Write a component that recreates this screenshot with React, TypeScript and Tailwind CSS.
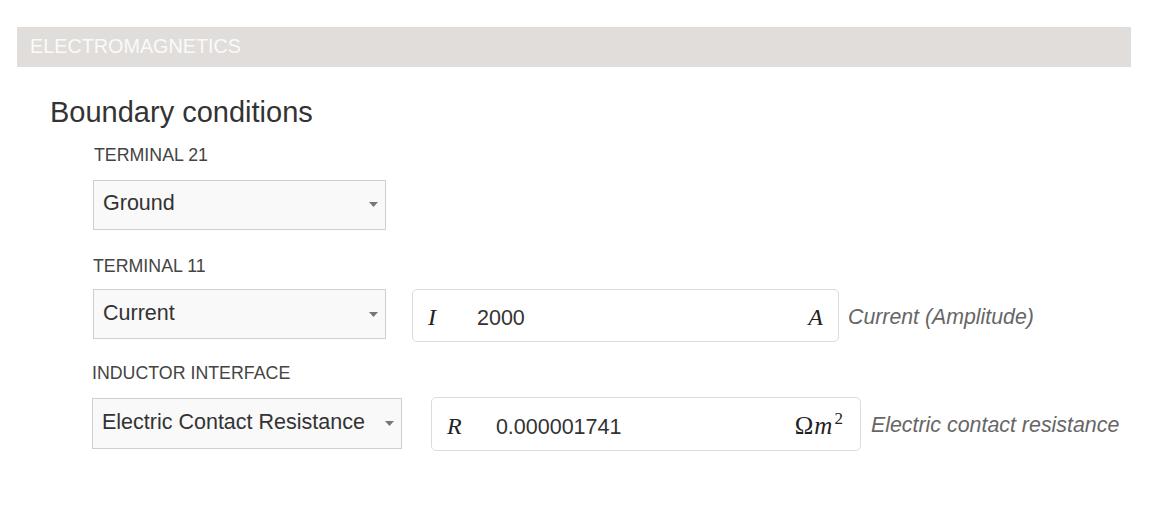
import React from "react";

function Caret() {
  return (
    <svg width="9" height="5" viewBox="0 0 9 5" className="shrink-0">
      <polygon points="0,0 9,0 4.5,5" fill="#777777" />
    </svg>
  );
}

function Select({ value, h, minW }: { value: string; h: string; minW: string }) {
  return (
    <div
      className={`inline-flex items-center justify-between gap-[20px] border border-[#cfcfcf] bg-[#f9f9f9] pl-[9px] pr-[7px] ${h} ${minW}`}
    >
      <span className="mb-[1px] text-[21.5px] leading-none text-[#333333] whitespace-nowrap">{value}</span>
      <Caret />
    </div>
  );
}

const mathFont = "font-['Liberation_Serif','Times_New_Roman',serif] italic text-[#222222]";

export default function App() {
  return (
    <div className="w-[1164px] h-[514px] bg-white pt-[27px] pl-[17px] font-['Liberation_Sans',Arial,sans-serif]">
      <div className="w-[1114px] h-[40px] bg-[#e0dddb] flex items-center pl-[13px] text-[19.8px] leading-none text-[#fafafa]">
        ELECTROMAGNETICS
      </div>
      <h2 className="mt-[31px] ml-[33px] text-[29px] leading-[29px] text-[#333333]">Boundary conditions</h2>
      <div className="ml-[75px] flex flex-col items-start">
        <div className="mt-[20px] ml-[2px] text-[17.8px] leading-[17.5px] text-[#444444]">TERMINAL 21</div>
        <div className="mt-[15px] ml-[1px]">
          <Select value="Ground" h="h-[50px]" minW="w-[293px]" />
        </div>

        <div className="mt-[28px] ml-[1px] text-[17.8px] leading-[17.5px] text-[#444444]">TERMINAL 11</div>
        <div className="mt-[14px] ml-[1px] flex items-start">
          <Select value="Current" h="h-[50px]" minW="w-[293px]" />
          <div className="ml-[26px] w-[427px] h-[53px] flex items-center pt-[4px] border border-[#dcdcdc] rounded-[5px] bg-white">
            <div className="flex-1 flex items-baseline">
              <span className={`pl-[15px] w-[64px] text-[24px] leading-none ${mathFont}`}>I</span>
              <span className="flex-1 text-[21.5px] leading-none text-[#333333]">2000</span>
              <span className={`pr-[15px] text-[24px] leading-none ${mathFont}`}>A</span>
            </div>
          </div>
          <div className="ml-[9px] self-center pt-[4px] text-[21.3px] leading-none italic text-[#666666] whitespace-nowrap">
            Current (Amplitude)
          </div>
        </div>

        <div className="mt-[23px] text-[17.8px] leading-[17.5px] text-[#444444]">INDUCTOR INTERFACE</div>
        <div className="mt-[14px] flex items-start">
          <div className="mt-[1px]">
            <Select value="Electric Contact Resistance" h="h-[51px]" minW="min-w-[293px]" />
          </div>
          <div className="ml-[29px] w-[430px] h-[54px] flex items-center pt-[4px] border border-[#dcdcdc] rounded-[5px] bg-white">
            <div className="flex-1 flex items-baseline">
              <span className={`pl-[15px] w-[64px] text-[24px] leading-none ${mathFont}`}>R</span>
              <span className="flex-1 text-[21.5px] leading-none text-[#333333]">0.000001741</span>
              <span className="pr-[17px] text-[25px] leading-none text-[#222222] font-['Liberation_Serif','Times_New_Roman',serif] whitespace-nowrap">
                Ω<span className="italic ml-[1px]">m</span>
                <sup className="text-[17px] relative -top-[10px] ml-[2px]">2</sup>
              </span>
            </div>
          </div>
          <div className="ml-[10px] self-center pt-[4px] text-[21.4px] leading-none italic text-[#666666] whitespace-nowrap">
            Electric contact resistance
          </div>
        </div>
      </div>
    </div>
  );
}
